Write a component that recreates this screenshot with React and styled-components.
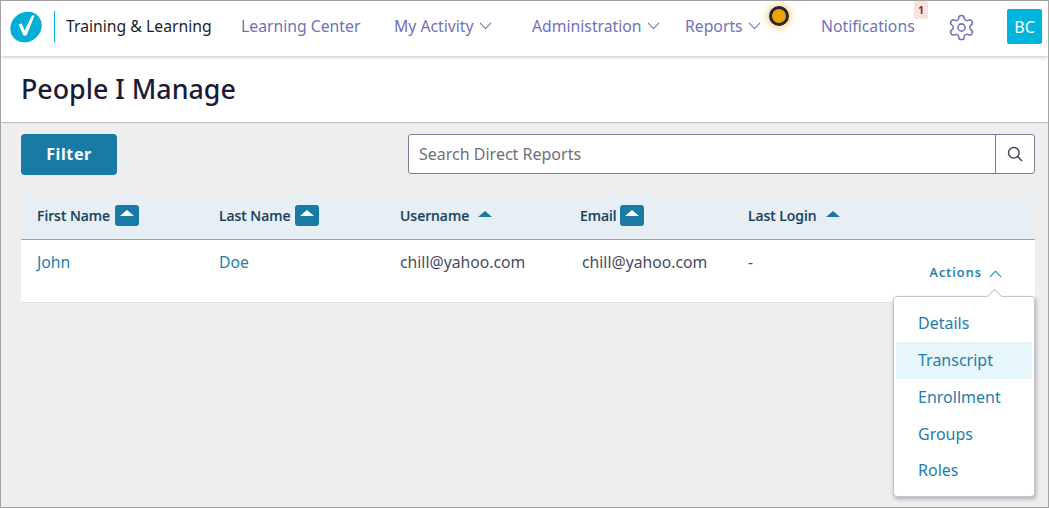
import React from "react";
import styled, { createGlobalStyle } from "styled-components";

const Global = createGlobalStyle`
  html, body { margin: 0; padding: 0; background: #eee; }
  * { box-sizing: border-box; }
  body { font-family: "Noto Sans", "Open Sans", sans-serif; }
`;

const Frame = styled.div`
  width: 1049px; height: 508px; border: 1px solid #a3a3a3;
  background: #eeeeee; position: relative; overflow: hidden;
  display: flex; flex-direction: column;
`;
const TopBar = styled.header`
  height: 55px; background: #fff; display: flex; align-items: center;
  padding: 0 0 4px 9px; box-shadow: 0 1px 4px rgba(0,0,0,.25); position: relative; z-index: 2; flex: none;
`;
const Divider = styled.span`
  width: 1px; height: 31px; background: #00b5dd; margin: 0 11px 0 12px;
`;
const AppName = styled.span`
  font-size: 15.75px; color: #1d1d28; width: 175px; white-space: nowrap; margin-bottom: 2px;
`;
const NavItem = styled.span`
  font-size: 15.75px; color: #6f72b8; display: flex; align-items: center; gap: 5px;
  white-space: nowrap; width: ${p => p.$w}px; position: relative; margin-bottom: 2px;
`;
const StatusDot = styled.span`
  position: absolute; left: 84px; top: -9px; width: 20px; height: 20px; border-radius: 50%;
  background: #eda200; border: 3px solid #23233a; box-shadow: 0 0 7px 2px rgba(240,180,40,.55);
`;
const Badge = styled.span`
  position: absolute; left: 93px; top: -14px; width: 14px; height: 18px; border-radius: 2px;
  background: #f8e2e2; color: #a31515; font-size: 10px; font-weight: 700;
  display: flex; align-items: center; justify-content: center;
`;
const GearWrap = styled.span`
  width: 58px; display: flex; color: #6f72b8; margin-top: 2px;
  svg { margin-left: -2px; }
`;
const Avatar = styled.span`
  width: 35px; height: 35px; background: #00b5dd; color: #fff; font-size: 16px; border-radius: 2px;
  display: flex; align-items: center; justify-content: center;
`;
const TitleBar = styled.div`
  height: 67px; background: #fff; border-bottom: 1px solid #bcbacb; padding: 14px 0 0 20px; flex: none;
`;
const Title = styled.h1`
  margin: 0; font-size: 26.8px; line-height: 37px; font-weight: 500; color: #1b1b38;
`;
const Body = styled.main`
  padding: 11px 13px 0 20px; flex: 1;
`;
const Toolbar = styled.div`
  display: flex; justify-content: space-between; align-items: flex-start; height: 61px;
`;
const FilterButton = styled.button`
  width: 96px; height: 41px; background: #187ba6; color: #fff; border: 0; border-radius: 4px;
  font: 700 16px "Noto Sans", sans-serif; letter-spacing: .6px; padding: 0 0 2px;
`;
const SearchBox = styled.div`
  width: 627px; height: 40px; display: flex; background: #fff; border: 1px solid #7d7d94; border-radius: 3px;
`;
const SearchText = styled.span`
  flex: 1; font-size: 16px; color: #6f6f7c; padding: 0 10px; line-height: 38px;
`;
const SearchButton = styled.span`
  width: 39px; border-left: 1px solid #7d7d94; display: flex; align-items: center; justify-content: center; color: #3f3f52;
`;
const Row = styled.div`
  display: grid; grid-template-columns: 182px 181px 180px 168px 1fr; padding-left: 16px;
`;
const HeadRow = styled(Row)`
  height: 45px; background: #e7eff5; border-bottom: 1px solid #6eb2d2; align-items: center; padding-bottom: 3px;
`;
const HeadCell = styled.span`
  font-size: 14px; font-weight: 500; color: #173f5c; display: flex; align-items: center;
  white-space: nowrap; -webkit-text-stroke: .2px #173f5c;
`;
const SortBox = styled.span`
  width: 24px; height: 21px; margin-left: ${p => p.$gap}px; border-radius: 3px; background: #187ba6;
  display: flex; align-items: center; justify-content: center; padding-bottom: 5px;
  &::after { content: ""; border: 7px solid transparent; border-top: 0; border-bottom: 6px solid #fff; }
`;
const SortPlain = styled.span`
  margin-left: 9px; margin-bottom: 4px; border: 7px solid transparent; border-top: 0; border-bottom: 6px solid #187ba6;
`;
const DataRow = styled(Row)`
  height: 63px; background: #fff; border-bottom: 1px solid #e2e2e2; padding-top: 10px;
`;
const Cell = styled.span`
  font-size: 15.75px; line-height: 24px; color: ${p => p.$link ? "#1f7ea8" : "#4a4a5e"};
  margin-left: ${p => p.$shift || 0}px; white-space: nowrap;
`;
const LastCell = styled(Cell)`
  display: flex; justify-content: space-between; align-items: flex-start; padding-right: 33px;
`;
const ActionsToggle = styled.span`
  display: flex; align-items: center; gap: 7px; margin-top: 10px;
  font-size: 12.7px; font-weight: 500; letter-spacing: 1.1px; color: #1f7ea8; -webkit-text-stroke: .2px #1f7ea8;
  svg { margin-top: 4px; }
`;
const Menu = styled.div`
  position: absolute; left: 892px; top: 295px; width: 142px; height: 201px; background: #fff;
  border: 1px solid #c5c3d6; border-radius: 4px; padding: 8px 2px; box-shadow: 1px 2px 4px rgba(0,0,0,.28);
  &::before {
    content: ""; position: absolute; top: -6px; right: 34px; width: 10px; height: 10px; background: #fff;
    border-top: 1px solid #c5c3d6; border-left: 1px solid #c5c3d6; transform: rotate(45deg);
  }
`;
const MenuItem = styled.div`
  height: 37px; line-height: 37px; padding-left: 22px; font-size: 16px; color: #1f7ea8;
  background: ${p => p.$active ? "#e6f6fb" : "transparent"};
  &:last-child { height: 36px; line-height: 35px; }
`;

const Chevron = ({ up, size = 14, color = "currentColor" }) => (
  <svg width={size} height={size * 0.6} viewBox="0 0 14 8" fill="none" stroke={color} strokeWidth="1.1">
    <path d={up ? "M1 7.2 7 1l6 6.2" : "M1 .8 7 7l6-6.2"} />
  </svg>
);

const Logo = () => (
  <svg width="32" height="32" viewBox="0 0 32 32">
    <ellipse cx="16" cy="16" rx="16.4" ry="14.6" transform="rotate(-40 16 16)" fill="#00aed6" />
    <path d="M8.5 13.2 L11.8 12.6 L14.6 19.5 L22 4.6 L24.5 4.6 L16.6 24.6 L13.4 24.6 Z" fill="#fff" />
  </svg>
);

const Gear = () => (
  <svg width="29" height="29" viewBox="0 0 24 24" fill="none" stroke="currentColor" strokeWidth="1.25" strokeLinejoin="round">
    <path d="M12.22 2h-.44a2 2 0 0 0-2 2v.18a2 2 0 0 1-1 1.73l-.43.25a2 2 0 0 1-2 0l-.15-.08a2 2 0 0 0-2.73.73l-.22.38a2 2 0 0 0 .73 2.73l.15.1a2 2 0 0 1 1 1.72v.51a2 2 0 0 1-1 1.74l-.15.09a2 2 0 0 0-.73 2.73l.22.38a2 2 0 0 0 2.73.73l.15-.08a2 2 0 0 1 2 0l.43.25a2 2 0 0 1 1 1.73V20a2 2 0 0 0 2 2h.44a2 2 0 0 0 2-2v-.18a2 2 0 0 1 1-1.73l.43-.25a2 2 0 0 1 2 0l.15.08a2 2 0 0 0 2.73-.73l.22-.39a2 2 0 0 0-.73-2.73l-.15-.08a2 2 0 0 1-1-1.74v-.5a2 2 0 0 1 1-1.74l.15-.09a2 2 0 0 0 .73-2.73l-.22-.38a2 2 0 0 0-2.73-.73l-.15.08a2 2 0 0 1-2 0l-.43-.25a2 2 0 0 1-1-1.73V4a2 2 0 0 0-2-2z" />
    <circle cx="12" cy="12" r="3" />
  </svg>
);

const SearchIcon = () => (
  <svg width="16" height="16" viewBox="0 0 16 16" fill="none" stroke="currentColor" strokeWidth="1.4">
    <circle cx="6.8" cy="6.8" r="5.3" />
    <path d="M10.6 10.6 15 15" />
  </svg>
);

const columns = [
  { name: "First Name", gap: 5 },
  { name: "Last Name", gap: 5 },
  { name: "Username" },
  { name: "Email", gap: 3 },
  { name: "Last Login" },
];

export default function App() {
  return (
    <Frame>
      <Global />
      <TopBar>
        <Logo />
        <Divider />
        <AppName>Training &amp; Learning</AppName>
        <NavItem $w={153}>Learning Center</NavItem>
        <NavItem $w={138}>My Activity <Chevron size={13} /></NavItem>
        <NavItem $w={153}>Administration <Chevron size={13} /></NavItem>
        <NavItem $w={136}>Reports <Chevron size={13} /><StatusDot /></NavItem>
        <NavItem $w={128}>Notifications<Badge>1</Badge></NavItem>
        <GearWrap><Gear /></GearWrap>
        <Avatar>BC</Avatar>
      </TopBar>
      <TitleBar><Title>People I Manage</Title></TitleBar>
      <Body>
        <Toolbar>
          <FilterButton>Filter</FilterButton>
          <SearchBox>
            <SearchText>Search Direct Reports</SearchText>
            <SearchButton><SearchIcon /></SearchButton>
          </SearchBox>
        </Toolbar>
        <HeadRow>
          {columns.map(c => (
            <HeadCell key={c.name}>{c.name}{c.gap ? <SortBox $gap={c.gap} /> : <SortPlain />}</HeadCell>
          ))}
        </HeadRow>
        <DataRow>
          <Cell $link>John</Cell>
          <Cell $link>Doe</Cell>
          <Cell>chill@yahoo.com</Cell>
          <Cell $shift={2}>chill@yahoo.com</Cell>
          <LastCell>
            -
            <ActionsToggle>Actions <Chevron up size={13} /></ActionsToggle>
          </LastCell>
        </DataRow>
      </Body>
      <Menu>
        <MenuItem>Details</MenuItem>
        <MenuItem $active>Transcript</MenuItem>
        <MenuItem>Enrollment</MenuItem>
        <MenuItem>Groups</MenuItem>
        <MenuItem>Roles</MenuItem>
      </Menu>
    </Frame>
  );
}
